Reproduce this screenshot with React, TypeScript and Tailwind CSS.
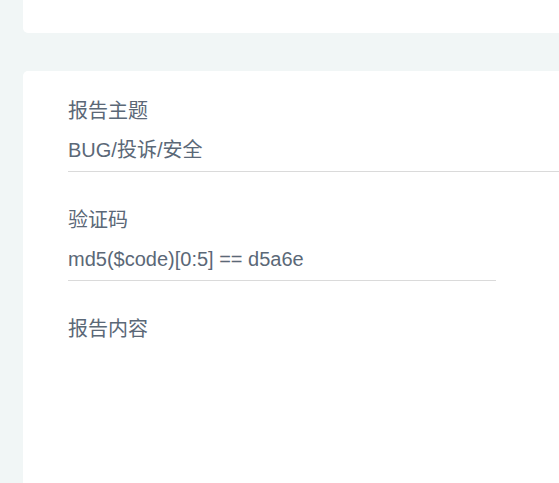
import React from "react";

const font = { fontFamily: '"Liberation Sans", "Noto Sans CJK SC", sans-serif' };

function Field({ label, value, widthClass }: { label: string; value?: string; widthClass?: string }) {
  return (
    <div className="mb-[36px]">
      <div className="text-[20px] leading-[24px] text-[#5b6877]">{label}</div>
      {value !== undefined && (
        <div className={`mt-[15px] pb-[9px] border-b border-[#dadada] ${widthClass ?? ""}`}>
          <div className="text-[20px] leading-[24px] text-[#5b6877]">{value}</div>
        </div>
      )}
    </div>
  );
}

export default function App() {
  return (
    <div className="h-[483px] w-[559px] overflow-hidden bg-[#f1f6f6] pl-[23px]" style={font}>
      <div className="h-[33px] bg-white rounded-bl-[5px]" />
      <div className="mt-[38px] h-[600px] bg-white rounded-tl-[5px] pt-[28px] pl-[45px]">
        <Field label="报告主题" value="BUG/投诉/安全" widthClass="w-full" />
        <Field label="验证码" value="md5($code)[0:5] == d5a6e" widthClass="w-[428px]" />
        <Field label="报告内容" />
      </div>
    </div>
  );
}
